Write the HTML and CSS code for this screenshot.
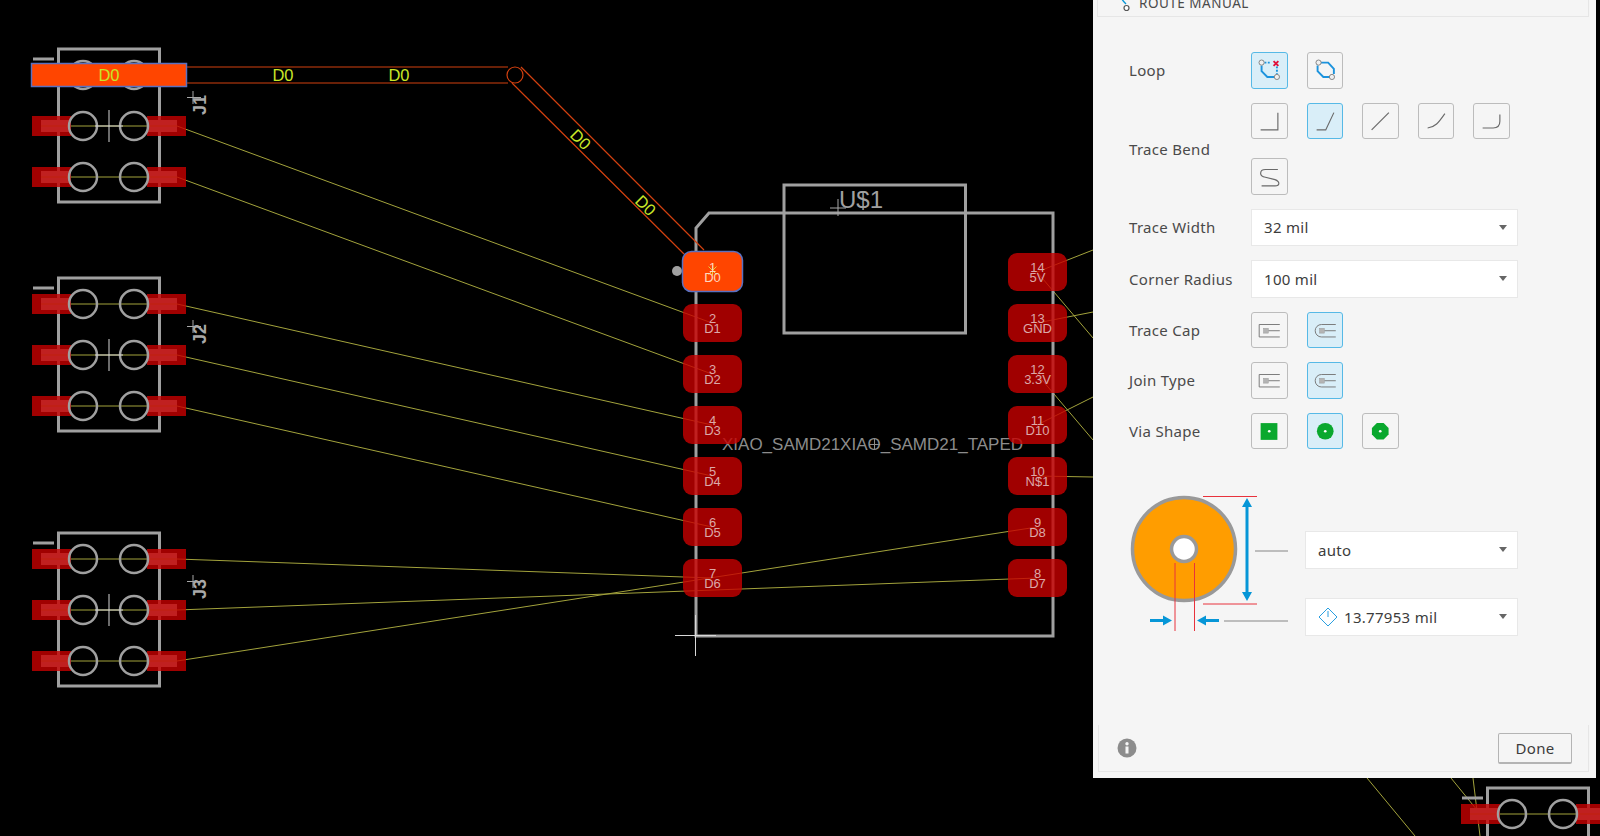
FILE: index.html
```html
<!DOCTYPE html>
<html lang="en">
<head>
  <meta charset="UTF-8" />
  <title>Route Manual</title>
  <link rel="stylesheet" href="styles.css">
</head>
<body>
  <!-- board canvas -->
  <svg class="board" width="1600" height="836" viewBox="0 0 1600 836">
    <defs>
      <g id="header-row">
        <rect class="pin-core" x="41" y="-6" width="29" height="12" />
        <rect class="pin-core" x="147" y="-6" width="30" height="12" />
        <line class="air" x1="41" y1="0" x2="177" y2="0" />
        <rect class="pad" x="32" y="-10" width="39" height="20" />
        <rect class="pad" x="147" y="-10" width="39" height="20" />
        <circle class="hole" cx="83" cy="0" r="14" />
        <circle class="hole" cx="134" cy="0" r="14" />
      </g>
      <g id="header">
        <rect class="silk" x="58.5" y="49" width="101" height="153" />
        <line class="silk" x1="33" y1="59" x2="54" y2="59" />
        <use href="#header-row" y="75" />
        <use href="#header-row" y="126" />
        <use href="#header-row" y="177" />
        <line class="cross" x1="109" y1="110" x2="109" y2="142" />
        <line class="cross" x1="95" y1="126" x2="123" y2="126" />
      </g>
      <rect id="pad-big" class="pad" x="-29.5" y="-19" width="59" height="38" rx="9" />
    </defs>

    <!-- airwires -->
    <g class="air">
      <line x1="177" y1="126" x2="712" y2="323" />
      <line x1="177" y1="177" x2="712" y2="374" />
      <line x1="177" y1="304" x2="712" y2="425" />
      <line x1="177" y1="355" x2="712" y2="476" />
      <line x1="177" y1="406" x2="712" y2="527" />
      <line x1="177" y1="559" x2="712" y2="578" />
      <line x1="177" y1="610" x2="1037" y2="578" />
      <line x1="177" y1="661" x2="1037" y2="527" />
      <line x1="1037" y1="272" x2="1093" y2="250" />
      <line x1="1037" y1="272" x2="1093" y2="338" />
      <line x1="1037" y1="323" x2="1093" y2="312" />
      <line x1="1037" y1="374" x2="1093" y2="440" />
      <line x1="1037" y1="425" x2="1093" y2="397" />
      <line x1="1037" y1="476" x2="1093" y2="477" />
      <line x1="1367" y1="778" x2="1415" y2="836" />
      <line x1="1451" y1="778" x2="1477" y2="810" />
      <line x1="1473" y1="778" x2="1480" y2="836" />
    </g>

    <!-- connectors -->
    <use href="#header" />
    <use href="#header" y="229" />
    <use href="#header" y="484" />
    <use href="#header" x="1429" y="739" />
    <text class="ref" transform="translate(206,115) rotate(-90)">J1</text>
    <text class="ref" transform="translate(206,344) rotate(-90)">J2</text>
    <text class="ref" transform="translate(206,599) rotate(-90)">J3</text>
    <path class="cross dim" d="M187 97.500H201M193 91V104M187 326.500H201M193 320V333M187 581.500H201M193 575V588" />

    <!-- module outline -->
    <path class="silk" d="M696 636V228L709 213H1053V636Z" />
    <rect class="silk" x="784" y="185" width="181.500" height="148" />
    <text class="ref-big" x="839" y="208">U$1</text>
    <path class="cross dim" d="M830 208H846M838 199V216" />
    <text class="value" x="722" y="450">XIAO_SAMD21XIAO_SAMD21_TAPED</text>
    <path class="cross thin" d="M869 444.500H880M874.500 439V450" />
    <path class="cross" d="M675 635.500H716M695.500 615V656" />

    <!-- selected net -->
    <rect class="sel" x="31.500" y="63.500" width="155" height="23" />
    <path class="trace" d="M187 67H508M187 83H508M521 67L704 250M512 83L684 254" />
    <circle class="trace" cx="515" cy="75" r="8" />
    <text class="net" x="109" y="81">D0</text>
    <text class="net" x="283" y="81">D0</text>
    <text class="net" x="399" y="81">D0</text>
    <text class="net" transform="translate(580,140) rotate(45)" y="5">D0</text>
    <text class="net" transform="translate(645,206) rotate(45)" y="5">D0</text>

    <!-- module pads, left column -->
    <circle class="dot" cx="677" cy="271" r="5" />
    <g transform="translate(712.500,271.500)">
      <rect class="sel" x="-30" y="-20" width="60" height="40" rx="9" />
      <path class="star" d="M-4 -5L4 3M4 -5L-4 3M0 -6V4" />
      <text class="pin-sel" y="0.500">1</text>
      <text class="pin-sel" y="10.500">D0</text>
    </g>
    <g transform="translate(712.500,323)"><use href="#pad-big" /><text class="pin">2</text><text class="pin" y="10">D1</text></g>
    <g transform="translate(712.500,374)"><use href="#pad-big" /><text class="pin">3</text><text class="pin" y="10">D2</text></g>
    <g transform="translate(712.500,425)"><use href="#pad-big" /><text class="pin">4</text><text class="pin" y="10">D3</text></g>
    <g transform="translate(712.500,476)"><use href="#pad-big" /><text class="pin">5</text><text class="pin" y="10">D4</text></g>
    <g transform="translate(712.500,527)"><use href="#pad-big" /><text class="pin">6</text><text class="pin" y="10">D5</text></g>
    <g transform="translate(712.500,578)"><use href="#pad-big" /><text class="pin">7</text><text class="pin" y="10">D6</text></g>

    <!-- module pads, right column -->
    <g transform="translate(1037.500,272)"><use href="#pad-big" /><text class="pin">14</text><text class="pin" y="10">5V</text></g>
    <g transform="translate(1037.500,323)"><use href="#pad-big" /><text class="pin">13</text><text class="pin" y="10">GND</text></g>
    <g transform="translate(1037.500,374)"><use href="#pad-big" /><text class="pin">12</text><text class="pin" y="10">3.3V</text></g>
    <g transform="translate(1037.500,425)"><use href="#pad-big" /><text class="pin">11</text><text class="pin" y="10">D10</text></g>
    <g transform="translate(1037.500,476)"><use href="#pad-big" /><text class="pin">10</text><text class="pin" y="10">N$1</text></g>
    <g transform="translate(1037.500,527)"><use href="#pad-big" /><text class="pin">9</text><text class="pin" y="10">D8</text></g>
    <g transform="translate(1037.500,578)"><use href="#pad-big" /><text class="pin">8</text><text class="pin" y="10">D7</text></g>
  </svg>

  <!-- route panel -->
  <div class="panel">
    <div class="panel-head">
      <svg class="head-icon" width="16" height="18" viewBox="0 0 16 18">
        <path d="M3 0C2 4 4 6 7 9" fill="none" stroke="#0696d7" stroke-width="1.400" />
        <circle cx="7.500" cy="13" r="2.500" fill="#fff" stroke="#555" stroke-width="1.200" />
      </svg>
      <span>ROUTE MANUAL</span>
    </div>

    <div class="form">
      <div class="label">Loop</div>
      <div class="tools">
        <button class="tool on">
          <svg viewBox="0 0 36 36">
            <path class="blue" d="M10 13V19L16 25H23" />
            <path class="blue dots" d="M13 10H20M26 14V22" />
            <path class="red" d="M22.500 8.500L27.500 13.500M27.500 8.500L22.500 13.500" />
            <circle class="node" cx="10" cy="10" r="2.700" />
            <circle class="node" cx="26" cy="25" r="2.700" />
          </svg>
        </button>
        <button class="tool">
          <svg viewBox="0 0 36 36">
            <path class="blue" d="M13 10H21L27 16.500V22M23 25H16L10 19V13" />
            <circle class="node" cx="11" cy="10" r="2.700" />
            <circle class="node" cx="25" cy="25" r="2.700" />
          </svg>
        </button>
      </div>

      <div class="label">Trace Bend</div>
      <div class="tools">
        <button class="tool"><svg viewBox="0 0 36 36"><path class="ln" d="M9 27H27V9" /></svg></button>
        <button class="tool on"><svg viewBox="0 0 36 36"><path class="ln" d="M9 27H18.500L27 9" /></svg></button>
        <button class="tool"><svg viewBox="0 0 36 36"><path class="ln" d="M9 27L27 9" /></svg></button>
        <button class="tool"><svg viewBox="0 0 36 36"><path class="ln" d="M9 25C17 24 20 20 27 10" /></svg></button>
        <button class="tool"><svg viewBox="0 0 36 36"><path class="ln" d="M9 25H20Q27 25 27 18V11" /></svg></button>
        <button class="tool"><svg viewBox="0 0 36 36"><path class="ln" d="M27 11H14Q9 11 9 15Q9 18 14 19L24 21.500Q28 23 28 25.500Q28 28 24 28H10" /></svg></button>
      </div>

      <div class="label">Trace Width</div>
      <div class="select"><span>32 mil</span><i></i></div>

      <div class="label">Corner Radius</div>
      <div class="select"><span>100 mil</span><i></i></div>

      <div class="label">Trace Cap</div>
      <div class="tools">
        <button class="tool">
          <svg viewBox="0 0 36 36"><path class="cap" d="M29 12H7.500V25H29M17 18.500H29" /><rect class="cap-pin" x="12" y="16" width="5" height="5" /></svg>
        </button>
        <button class="tool on">
          <svg viewBox="0 0 36 36"><path class="cap" d="M29 12H14A6.500 6.500 0 0 0 14 25H29M17 18.500H29" /><rect class="cap-pin" x="12" y="16" width="5" height="5" /></svg>
        </button>
      </div>

      <div class="label">Join Type</div>
      <div class="tools">
        <button class="tool">
          <svg viewBox="0 0 36 36"><path class="cap" d="M29 12H7.500V25H29M17 18.500H29" /><rect class="cap-pin" x="12" y="16" width="5" height="5" /></svg>
        </button>
        <button class="tool on">
          <svg viewBox="0 0 36 36"><path class="cap" d="M29 12H14A6.500 6.500 0 0 0 14 25H29M17 18.500H29" /><rect class="cap-pin" x="12" y="16" width="5" height="5" /></svg>
        </button>
      </div>

      <div class="label">Via Shape</div>
      <div class="tools">
        <button class="tool">
          <svg viewBox="0 0 36 36"><rect class="via" x="9" y="9.500" width="17.500" height="17.500" /><circle cx="18" cy="18" r="1.400" fill="#fff" /></svg>
        </button>
        <button class="tool on">
          <svg viewBox="0 0 36 36"><circle class="via" cx="18" cy="18" r="8.700" /><circle cx="18" cy="18" r="1.400" fill="#fff" /></svg>
        </button>
        <button class="tool">
          <svg viewBox="0 0 36 36"><path class="via" d="M14.500 9.500H21.500L26.700 14.500V21.500L21.500 26.700H14.500L9.300 21.500V14.500Z" /><circle cx="18" cy="18" r="1.400" fill="#fff" /></svg>
        </button>
      </div>
    </div>

    <div class="via-block">
      <svg class="via-diagram" width="176" height="150" viewBox="1129 490 176 150">
        <circle cx="1184" cy="549" r="51.500" fill="#ff9d00" stroke="#999" stroke-width="3.500" />
        <circle cx="1184" cy="549" r="12.500" fill="#fff" stroke="#999" stroke-width="3.500" />
        <path d="M1203 496.500H1257M1203 604H1257M1175 563V631M1194.500 563V631" fill="none" stroke="#e8323c" stroke-width="1" />
        <path d="M1247 503V597" stroke="#0696d7" stroke-width="3" />
        <path d="M1247 498L1252 507H1242ZM1247 601L1252 592H1242Z" fill="#0696d7" />
        <path d="M1150 620.500H1165M1204 620.500H1219" stroke="#0696d7" stroke-width="3" />
        <path d="M1172 620.500L1163 615.500V625.500ZM1197 620.500L1206 615.500V625.500Z" fill="#0696d7" />
        <path d="M1255 551H1288M1224 621H1288" stroke="#aaa" stroke-width="1.500" />
      </svg>
      <div class="via-selects">
        <div class="select"><span>auto</span><i></i></div>
        <div class="select">
          <svg class="diamond" width="20" height="20" viewBox="0 0 20 20">
            <path d="M10 1L19 10L10 19L1 10Z" fill="none" stroke="#2a9fe0" stroke-width="1" />
            <path d="M10 4V10" stroke="#2a9fe0" stroke-width="1" />
          </svg>
          <span>13.77953 mil</span><i></i>
        </div>
      </div>
    </div>

    <div class="panel-foot">
      <svg width="20" height="20" viewBox="0 0 20 20">
        <circle cx="10" cy="10" r="9.500" fill="#8c8c8c" />
        <rect x="8.500" y="8.500" width="3" height="7" fill="#f5f5f5" />
        <circle cx="10" cy="5.800" r="1.700" fill="#f5f5f5" />
      </svg>
      <button class="done">Done</button>
    </div>
  </div>
</body>
</html>
```

FILE: styles.css
```css
body {
  margin: 0;
  width: 1600px;
  height: 836px;
  background: #000;
  overflow: hidden;
  position: relative;
  font-family: "Noto Sans", sans-serif;
}
.board {
  display: block;
  font-family: "Liberation Sans", sans-serif;
}
.silk {
  fill: none;
  stroke: #a0a0a0;
  stroke-width: 3;
}
.air, .air line {
  stroke: #a3a33c;
  stroke-width: 1;
}
.pad {
  fill: #c80000;
  opacity: 0.8;
}
.pin-core {
  fill: #a0a0a0;
}
.hole {
  fill: none;
  stroke: #a0a0a0;
  stroke-width: 2.500;
}
.cross {
  fill: none;
  stroke: #d8d8d8;
  stroke-width: 1;
}
.cross.dim {
  stroke: #a8a8a8;
}
.cross.thin {
  stroke: #8c8c8c;
}
.ref {
  fill: #a8a8a8;
  font-size: 18px;
  font-weight: bold;
}
.ref-big {
  fill: #a0a0a0;
  font-size: 24px;
}
.value {
  fill: #8c8c8c;
  font-size: 17px;
}
.sel {
  fill: #ff4500;
  stroke: #5a70c0;
  stroke-width: 1.500;
}
.trace {
  fill: none;
  stroke: #d2400f;
  stroke-width: 1.200;
}
.net {
  fill: #c8e628;
  font-size: 16.500px;
  text-anchor: middle;
}
.dot {
  fill: #a0a0a0;
}
.star {
  fill: none;
  stroke: #e8d040;
  stroke-width: 1;
}
.pin {
  fill: #dca8a8;
  font-size: 13px;
  text-anchor: middle;
}
.pin-sel {
  fill: #ffd8c0;
  font-size: 13px;
  text-anchor: middle;
}

.panel {
  position: absolute;
  left: 1093px;
  top: -20px;
  width: 503px;
  height: 798px;
  background: #f5f5f5;
  display: flex;
  flex-direction: column;
  color: #4a4a4a;
  font-size: 15px;
  letter-spacing: 0.300px;
}
.panel-head {
  margin: 0 7px 0 4px;
  height: 37px;
  box-sizing: border-box;
  border: 1px solid #e6e6e6;
  border-top: none;
  display: flex;
  align-items: center;
  padding-left: 21px;
  gap: 4px;
  font-size: 13.500px;
  letter-spacing: 0.500px;
}
.head-icon {
  margin-top: 12px;
}
.panel-head span {
  margin-top: 10px;
}
.form {
  margin: 35px 0 0 36px;
  display: grid;
  grid-template-columns: 122px 1fr;
  row-gap: 14px;
  align-items: center;
}
.tools {
  display: flex;
  flex-wrap: wrap;
  gap: 19px;
  max-width: 262px;
}
.tool {
  width: 36.500px;
  height: 36.500px;
  padding: 0;
  background: #f5f5f5;
  border: 1px solid #bcbcbc;
  border-radius: 3px;
  display: block;
}
.tool.on {
  background: #d9eef8;
  border-color: #56b9e6;
}
.tool svg {
  display: block;
  width: 34.500px;
  height: 34.500px;
}
.ln {
  fill: none;
  stroke: #6a6a6a;
  stroke-width: 1.200;
}
.blue {
  fill: none;
  stroke: #1c93dd;
  stroke-width: 2;
}
.dots {
  stroke-dasharray: 2 1.500;
}
.red {
  fill: none;
  stroke: #e0123c;
  stroke-width: 2;
}
.node {
  fill: #f0f0f0;
  stroke: #777;
  stroke-width: 0.900;
}
.cap {
  fill: none;
  stroke: #777;
  stroke-width: 1;
}
.cap-pin {
  fill: #b4b4b4;
  stroke: #999;
  stroke-width: 0.500;
}
.via {
  fill: #0aa82e;
}
.select {
  width: 267px;
  height: 37.500px;
  box-sizing: border-box;
  background: #fff;
  border: 1px solid #e8e8e8;
  display: flex;
  align-items: center;
  padding: 0 10px 0 12px;
  color: #3c3c3c;
}
.select span {
  flex: 1;
}
.select i {
  width: 0;
  height: 0;
  border-left: 4.500px solid transparent;
  border-right: 4.500px solid transparent;
  border-top: 5px solid #666;
}
.via-block {
  margin: 41px 0 0 36px;
  display: flex;
}
.via-diagram {
  display: block;
}
.via-selects {
  margin-top: 41px;
  display: flex;
  flex-direction: column;
  gap: 29.500px;
}
.via-selects .select {
  width: 213px;
}
.diamond {
  margin-right: 6px;
}
.panel-foot {
  margin: auto 7px 6px 5px;
  height: 47px;
  box-sizing: border-box;
  border: 1px solid #e6e6e6;
  border-top: none;
  display: flex;
  align-items: center;
  justify-content: space-between;
  padding: 0 16px 0 18px;
}
.done {
  width: 74px;
  height: 31px;
  background: #f5f5f5;
  border: 1px solid #b4b4b4;
  border-bottom-width: 2px;
  border-radius: 2px;
  font-family: inherit;
  font-size: 15px;
  letter-spacing: 0.300px;
  color: #3c3c3c;
  padding: 0;
}
```
